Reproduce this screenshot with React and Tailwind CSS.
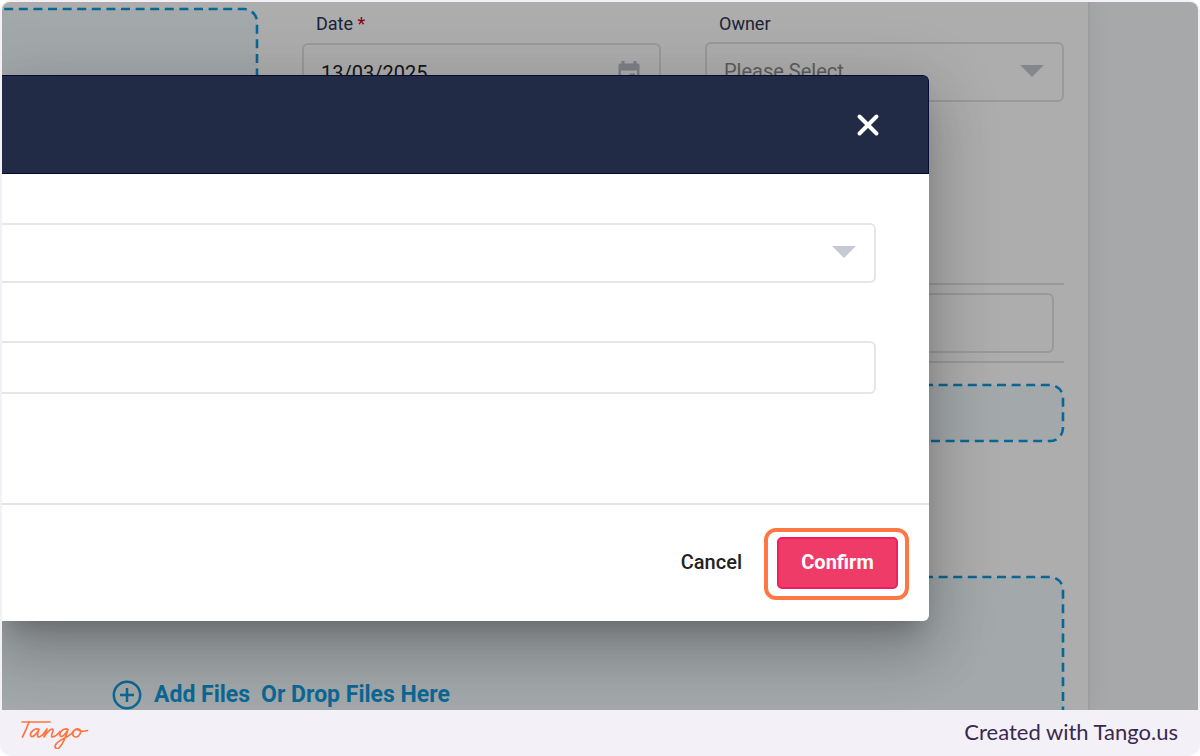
import { X } from "lucide-react";

function DashedOutline({ className = "h-full" }) {
  return (
    <svg
      aria-hidden="true"
      className={"pointer-events-none absolute top-0 -left-10 w-[calc(100%+40px)] overflow-visible " + className}
    >
      <rect
        width="100%"
        height="100%"
        rx="13"
        fill="#f0f8fc"
        stroke="#0d98db"
        strokeWidth="2.6"
        strokeDasharray="9 5.6"
      />
    </svg>
  );
}

function Caret({ className }) {
  return (
    <svg aria-hidden="true" viewBox="0 0 24 12" className={"pointer-events-none absolute h-3 w-6 " + className}>
      <path d="M0 0h24L12 12z" fill="currentColor" />
    </svg>
  );
}

function CalendarIcon() {
  return (
    <svg aria-hidden="true" viewBox="0 0 22 24" className="absolute top-[18px] right-5 h-6 w-6 text-[#b9bdc6]">
      <path
        fill="currentColor"
        fillRule="evenodd"
        d="M20 2.500h-1.500V0h-3v2.500h-9V0h-3v2.500H2a1.500 1.500 0 0 0-1.500 1.500v18a2 2 0 0 0 2 2h17a2 2 0 0 0 2-2V4A1.500 1.500 0 0 0 20 2.500zM19 21.500H3V9.500h16zM11.500 12.500h5.500v5.500h-5.500z"
      />
    </svg>
  );
}

function AddIcon() {
  return (
    <svg aria-hidden="true" viewBox="0 0 30 30" className="h-[30px] w-[30px]" fill="none" stroke="currentColor">
      <circle cx="15" cy="15" r="13.2" strokeWidth="2.5" />
      <path d="M15 8v14M8 15h14" strokeWidth="2.5" />
    </svg>
  );
}

function TangoLogo() {
  return (
    <svg
      role="img"
      aria-label="Tango"
      viewBox="0 -2 70 32"
      className="h-8 w-[70px]"
      fill="none"
      stroke="#ff7442"
      strokeWidth="1.7"
      strokeLinecap="round"
      strokeLinejoin="round"
    >
      <path d="M2 3h28" />
      <path d="M9 3Q6 11 2.500 18" />
      <path d="M19 10.500C15 8.500 10 13 10.500 16.500C11.500 20 17 15 19 10.500C17 15 17 18 19 18C22 18 25 13 27 10C26 13 25 15 24 18C27 13 31 9 33 10.500C34 12 30 17 32 18C35 18 38 15 40 12.500" />
      <path d="M48 10.500C44 8.500 39 13 40 16.500C41 19.500 46 15 48 10.500C46 17 43 25 39.500 28.500C37 31 34 29 35.500 26C38 21 47 19.500 52 14C54 11 57 9 59.500 10.500C62 12.500 59.500 17.500 56 18C51.500 18 52 12 56 10.500C59 10 60 14 67.500 11.500" />
    </svg>
  );
}

function PageForm() {
  return (
    <main className="w-full border-r-2 border-[#e8e8e9] bg-white pr-6 shadow-[2px_0_20px_rgba(0,0,0,0.06)]">
      <div className="flex gap-[45px]">
        <div className="relative mt-[7px] h-[190px] w-[255px]">
          <DashedOutline />
        </div>
        <div className="grid flex-1 grid-cols-2 gap-11">
          <div>
            <label htmlFor="date" className="ml-3.5 block pt-2.5 text-lg leading-6 text-[#2b3555]">
              Date <span className="text-[#c8001c]">*</span>
            </label>
            <div className="relative mt-[7px]">
              <input
                id="date"
                type="text"
                defaultValue="13/03/2025"
                className="h-[60px] w-full rounded-md border-2 border-[#e2e2e2] bg-transparent px-[17px] text-xl text-[#222]"
              />
              <CalendarIcon />
            </div>
          </div>
          <div>
            <label htmlFor="owner" className="ml-3.5 block pt-2.5 text-lg leading-6 text-[#2b3555]">
              Owner
            </label>
            <div className="relative mt-1.5">
              <select
                id="owner"
                className="h-[60px] w-full appearance-none rounded-md border-2 border-[#e2e2e2] bg-transparent px-[17px] pb-[3px] text-xl text-[#8a8a8a]"
              >
                <option>Please Select</option>
              </select>
              <Caret className="top-[23px] right-5 text-[#c3c8d2]" />
            </div>
          </div>
        </div>
      </div>
      <div className="mt-[84px] border-y-2 border-[#e2e2e2] py-2 pr-2.5">
        <input
          type="text"
          aria-label="Details"
          className="block h-[60px] w-full rounded-md border-2 border-[#e2e2e2] bg-transparent px-4"
        />
      </div>
      <div className="relative mt-[22px] mr-px h-14">
        <DashedOutline />
      </div>
      <div className="relative mt-[136px] mr-px pt-[103px]">
        <DashedOutline className="h-[calc(100%+40px)]" />
        <div className="relative flex h-[30px] items-center pl-[110px] text-[23px] font-bold text-[#149adc]">
          <button type="button" className="flex items-center gap-3">
            <AddIcon />
            Add Files
          </button>
          <span className="ml-[11px]">Or Drop Files Here</span>
        </div>
      </div>
    </main>
  );
}

function ConfirmDialog() {
  return (
    <div
      role="dialog"
      aria-modal="true"
      aria-label="Confirm"
      className="absolute top-[73px] right-[269px] left-0 rounded-r-md bg-white shadow-[0_16px_22px_-10px_rgba(0,0,0,0.2),0_35px_55px_4px_rgba(0,0,0,0.14),0_13px_67px_12px_rgba(0,0,0,0.12)]"
    >
      <header className="flex h-[99px] items-center justify-end rounded-tr-md border border-l-0 border-[#050b36] bg-[#212b46] pr-[43px] text-white">
        <button type="button" aria-label="Close">
          <X size={34} strokeWidth={2.8} />
        </button>
      </header>
      <div className="pt-[49px] pr-[53px] pb-[109px]">
        <div className="relative">
          <select
            aria-label="Selection"
            className="block h-[60px] w-full appearance-none rounded-r-md border-2 border-l-0 border-[#e6e6e6] bg-white"
          />
          <Caret className="top-[23px] right-5 text-[#c5cad3]" />
        </div>
        <input
          type="text"
          aria-label="Comment"
          className="mt-[58px] block h-[53px] w-full rounded-r-md border-2 border-l-0 border-[#e6e6e6] bg-white px-4"
        />
      </div>
      <footer className="flex items-center justify-end gap-[22px] border-t-2 border-[#e2e4e7] pt-[23px] pr-5 pb-[21px] text-xl">
        <button type="button" className="pb-1 font-medium text-[#222]">
          Cancel
        </button>
        <div className="rounded-xl border-4 border-[#ff7844] pt-[5px] pr-[7px] pb-[7px] pl-[9px]">
          <button
            type="button"
            className="block h-[52px] w-[121px] rounded-[5px] border-2 border-[#ed1f5e] bg-[#ef3b67] pb-[3px] font-bold text-white"
          >
            Confirm
          </button>
        </div>
      </footer>
    </div>
  );
}

export default function App() {
  return (
    <div className="flex min-h-screen flex-col overflow-hidden rounded-xl bg-[#f3f1f7] px-0.5 pt-0.5 font-[Roboto,sans-serif]">
      <div className="relative flex flex-1 overflow-hidden rounded-t-lg bg-[#f6f8fb] pr-[108px]">
        <PageForm />
        <div className="absolute inset-0 bg-black/32" />
        <ConfirmDialog />
      </div>
      <div className="flex h-[46px] items-center justify-between px-[18px] text-[#3a2850]">
        <TangoLogo />
        <p className="pr-0.5 pb-0.5 font-[Lato,sans-serif] text-[22px] leading-7">Created with Tango.us</p>
      </div>
    </div>
  );
}
